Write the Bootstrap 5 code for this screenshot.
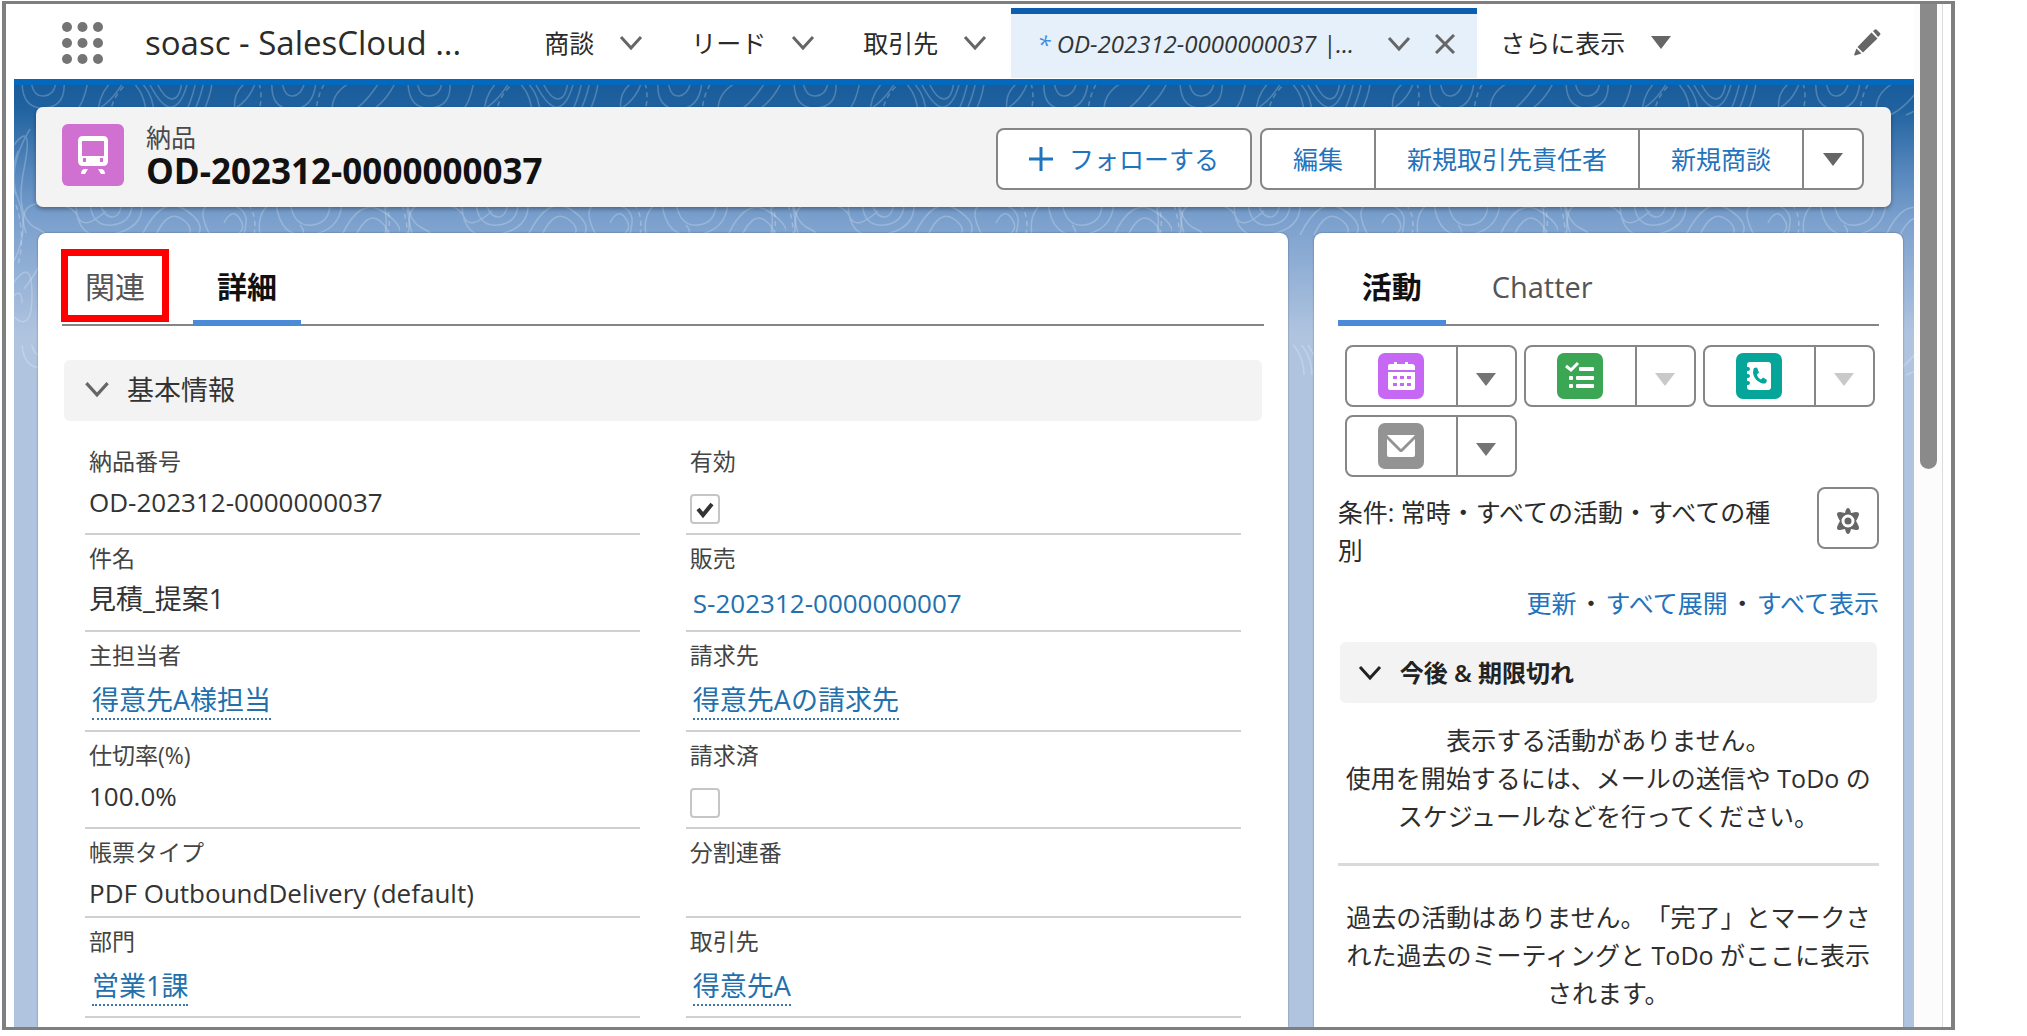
<!DOCTYPE html>
<html lang="ja">
<head>
<meta charset="utf-8">
<meta name="viewport" content="width=device-width, initial-scale=1">
<title>納品 OD-202312-0000000037</title>
<link href="https://cdn.jsdelivr.net/npm/bootstrap@5.3.0/dist/css/bootstrap.min.css" rel="stylesheet">
<style>
  body { font-family: "Open Sans", "Noto Sans CJK JP", sans-serif; font-size: 25px; line-height: 38px; color: #2e2e2e; background: #fff; }
  a { color: #1f74bd; text-decoration: none; }
  button { font-family: inherit; }
  .app-frame { height: 100vh; padding: 1px 72px 6px 2px; }
  .app-window { border: 4px solid #7f7f7f; border-top-width: 3px; border-bottom-width: 3px; padding-left: 8px; }
  .scroll-rail { width: 29px; padding-left: 6px; background: #fcfcfc; border-right: 1px solid #dcdcdc; margin-right: 8px; }
  .scroll-thumb { width: 17px; height: 45.5%; background: #8a8a8a; border-radius: 0 0 9px 9px; }

  .app-nav { height: 81px; border-bottom: 6px solid #0468bd; padding: 2px 33px 0 48px; color: #2b2b2b; }
  .app-name { font-size: 33px; margin-left: 42px; margin-right: 83px; }
  .nav-entry { gap: 25px; margin-right: 48px; }
  .nav-entry:nth-of-type(3) { margin-right: 24px; }
  .nav-entry a, .more-entry { color: #2b2b2b; }
  .icon-btn { border: 0; background: none; padding: 0; line-height: 0; display: inline-flex; }
  .record-tab { margin-top: 2px; margin-bottom: 1px; border-top: 6px solid #0b5fae; background: #e5f0fa; width: 466px; padding: 0 22px 4px 26px; }
  .record-tab a { color: #333; font-size: 24px; font-style: italic; }
  .record-tab .dirty { color: #3b8ede; }
  .more-entry { gap: 26px; margin-left: 23px; font-size: 25px; }

  .stage { background: linear-gradient(#1a5c9b 0, #1f629f 22px, #5586bc 85px, #7ba0cd 135px, #b0c4e0 250px, #b0c4e0 100%); padding: 22px 11px 0 22px; }
  .topo { position: absolute; left: 0; top: 0; width: 100%; height: 300px; }
  .record-head { background: #f3f3f3; border-radius: 7px; height: 100px; margin-right: 12px; padding: 0 27px 0 26px; gap: 22px; box-shadow: 0 2px 4px rgba(0,0,0,.35); }
  .record-kind { font-size: 25px; line-height: 32px; color: #4a4a4a; }
  .record-name { font-size: 35px; line-height: 36px; font-weight: 700; color: #111; margin: 0; }
  .act { background: #fff; border: 2px solid #868686; border-radius: 8px; color: #1f74bd; font-size: 25px; line-height: 38px; height: 62px; padding: 0 31px; }
  .act.arrow { padding: 0 19px; }
  .act svg { vertical-align: middle; }
  .btn-group > .act + .act { margin-left: -2px; border-top-left-radius: 0; border-bottom-left-radius: 0; }
  .btn-group > .act:not(:last-child) { border-top-right-radius: 0; border-bottom-right-radius: 0; }

  .panes { gap: 26px; margin-top: 26px; padding-left: 2px; }
  .pane { background: #fff; border-radius: 8px 8px 0 0; box-shadow: 0 0 2px rgba(0,0,0,.4); padding: 16px 24px 0; min-width: 0; }
  .pane-main { flex: 1 1 0; }
  .pane-side { flex: 0 0 31.6%; }
  .tabs-line { border-bottom: 2px solid #858585; height: 77px; }
  .tabs-line a { font-size: 30px; color: #555; padding: 19px 24px 0; display: block; height: 77px; }
  .tabs-line a.on { color: #111; font-weight: 700; border-bottom: 6px solid #4a8ad8; }
  .tabs-line a.marked { border: 7px solid #f00; height: 73px; padding: 12px 17px 0; margin-right: 24px; margin-left: -1px; }
  .tabs-line a.latin { padding-left: 46px; font-size: 29px; }
  .fold { background: #f3f3f3; border: 0; border-radius: 6px; height: 61px; width: calc(100% - 4px); margin: 0 2px; text-align: left; }
  .fold-main { font-size: 27px; padding: 0 20px 2px; gap: 17px; margin-top: 34px; color: #333; }
  .fold-side { font-size: 24px; font-weight: 600; padding: 0 18px; gap: 18px; margin-top: 20px; color: #222; }

  .fields { display: grid; grid-template-columns: 1fr 1fr; column-gap: 46px; margin: 17px 23px 0; }
  .field { border-bottom: 2px solid #d0d0d0; padding: 8px 4px 0; min-height: 97px; }
  .field.low { min-height: 89px; }
  .field.tall { min-height: 100px; }
  .field-name { font-size: 23px; line-height: 30px; color: #444; display: block; }
  .field-value { font-size: 26px; line-height: 36px; color: #333; margin-top: 8px; }
  .field-value.kanji { font-size: 27px; }
  .field-value.linked { margin-top: 12px; padding-left: 3px; }
  .field-value a { color: #2370ad; }
  .dotted { border-bottom: 2px dotted #3c77a8; display: inline-block; line-height: 36px; }
  .field .form-check-input { width: 30px; height: 30px; margin: 18px 0 0; border: 2px solid #c6c6c6; border-radius: 4px; background-color: #fff; display: block; opacity: 1; box-shadow: none; }
  .field .form-check-input:checked { background-image: url("data:image/svg+xml,%3Csvg xmlns='http://www.w3.org/2000/svg' viewBox='0 0 26 26'%3E%3Cpath d='M6 13l5 6L20 8' fill='none' stroke='%23333' stroke-width='4'/%3E%3C/svg%3E"); }

  .quick { gap: 8px 7px; margin: 19px 0 0 7px; }
  .quick .act { padding: 0; }
  .quick .act:first-child { width: 113px; }
  .quick .act:last-child { width: 61px; }
  .filter-row { margin-top: 10px; }
  .filter-text { color: #2b2b2b; margin-top: 6px; max-width: 450px; }
  .gear { width: 62px; padding: 0; }
  .list-links { gap: 2px; margin-top: 15px; }
  .empty-text { text-align: center; padding: 0 6px; margin: 18px 0 0; text-spacing-trim: space-all; }
  .side-rule { border-top: 3px solid #dadada; opacity: 1; margin: 28px 0 0; }
  .side-rule + .empty-text { margin-top: 32px; }
</style>
<script src="https://cdn.jsdelivr.net/npm/bootstrap@5.3.0/dist/js/bootstrap.bundle.min.js"></script>
</head>
<body class="overflow-hidden">
<svg width="0" height="0" class="position-absolute">
  <symbol id="chev" viewBox="0 0 24 16"><path d="M2 2l10 11L22 2" fill="none" stroke="currentColor" stroke-width="3"/></symbol>
  <symbol id="tri" viewBox="0 0 20 13"><path d="M0 0h20L10 13z" fill="currentColor"/></symbol>
</svg>
<div class="app-frame">
<div class="app-window d-flex h-100 overflow-hidden">
  <div class="d-flex flex-column flex-grow-1 overflow-hidden">
    <nav class="app-nav d-flex align-items-stretch flex-shrink-0">
      <button class="icon-btn align-items-center" aria-label="アプリケーションランチャー">
        <svg width="41" height="42" viewBox="0 0 41 42" fill="#747474"><circle cx="5" cy="5" r="5"/><circle cx="20.500" cy="5" r="5"/><circle cx="36" cy="5" r="5"/><circle cx="5" cy="21" r="5"/><circle cx="20.500" cy="21" r="5"/><circle cx="36" cy="21" r="5"/><circle cx="5" cy="37" r="5"/><circle cx="20.500" cy="37" r="5"/><circle cx="36" cy="37" r="5"/></svg>
      </button>
      <span class="app-name align-self-center text-nowrap">soasc - SalesCloud ...</span>
      <div class="nav-entry d-flex align-items-center text-nowrap"><a href="#">商談</a><button class="icon-btn" aria-label="商談リスト"><svg width="24" height="16" color="#666"><use href="#chev"/></svg></button></div>
      <div class="nav-entry d-flex align-items-center text-nowrap"><a href="#">リード</a><button class="icon-btn" aria-label="リードリスト"><svg width="24" height="16" color="#666"><use href="#chev"/></svg></button></div>
      <div class="nav-entry d-flex align-items-center text-nowrap"><a href="#">取引先</a><button class="icon-btn" aria-label="取引先リスト"><svg width="24" height="16" color="#666"><use href="#chev"/></svg></button></div>
      <div class="record-tab d-flex align-items-center text-nowrap">
        <a href="#" class="me-auto"><span class="dirty">*</span> OD-202312-0000000037 |...</a>
        <button class="icon-btn me-4" aria-label="タブ操作"><svg width="24" height="16" color="#666"><use href="#chev"/></svg></button>
        <button class="icon-btn" aria-label="タブを閉じる"><svg width="20" height="20" viewBox="0 0 20 20" stroke="#666" stroke-width="3"><path d="M1 1l18 18M19 1L1 19"/></svg></button>
      </div>
      <button class="icon-btn more-entry align-items-center text-nowrap">さらに表示 <svg width="20" height="13" color="#666"><use href="#tri"/></svg></button>
      <button class="icon-btn ms-auto align-items-center" aria-label="編集"><svg width="27" height="27" viewBox="0 0 27 27" fill="#666"><path d="M19 2l2-1.500q1-.5 2 .5l3 3q1 1 0 2l-2 2zM17.500 3.500l6 6L9 23.500 3.500 18zM2.500 19.500l5 5L1 26.500q-1 0-.8-1z"/></svg></button>
    </nav>

    <main class="stage position-relative d-flex flex-column flex-grow-1">
      <svg class="topo" aria-hidden="true">
        <defs><pattern id="contour" width="386" height="260" patternUnits="userSpaceOnUse">
          <g fill="none" stroke="#fff" stroke-opacity=".22" stroke-width="1.500">
            <path d="M8-4q0 28 22 27t20-27M17-4q2 16 13 15t12-15M62 26q8-8 12-30M84 30q0-20 14-34M70 30q24-6 40-34"/>
            <path d="M118-4q14 14 14 34M126-4q14 14 14 34M134-4q14 28 24 26t16-26M142-4q8 18 16 18t10-18M182-4q-4 20-12 34M190-4q-4 20-12 34M198-4q0 12-10 34"/>
            <path d="M206 30q28-8 36-34M222 30q-6-22 12-34M258-4q-2 28 20 28t24-28M268-4q2 16 11 15t12-15M318 30q-2-24 22-34M332 30q18-8 34-34M348 30q22-8 34-34"/>
            <path d="M0 60q20-26 10 24t14 60-14 60M4 66q-10 28-2 44M16 44q-24 40-12 70t-4 62M378 50q-24 20-14 48t8 44-10 50"/>
            <path d="M12 148q-10-30 18-30t34 14 28-6M62 118q0 38 34 32t32-32M76 118q2 24 22 22t20-22M86 118q4 14 12 14t10-14M128 150q20-40 42-26t14 26M142 150q12-26 26-16t4 18M196 150q-18-34 10-32t26 20-8 16M210 138q8-16 16-4t-8 18"/>
            <path d="M246 150q-4-24 14-34M262 118q4 36 34 32t32-32M276 118q4 24 22 22t18-22M328 150q18-38 40-24t18 26M342 150q12-24 24-14t4 16"/>
            <path d="M-2 200q20-30 20 10t-20 20M-2 212q10-10 10 6M250 240q-8-40 20-64t16-36M258 248q0-40 24-64M266 252q0-40 24-50"/>
          </g>
          <g fill="none" stroke="#fff" stroke-opacity=".25" stroke-width="1.500" stroke-dasharray="5 4"><path d="M96 30q2-20 20-34M244 30q6-20 0-34M302 30q0-18 10-34M240 150q4-24-10-34M374 150q4-20-4-34M2 120q10 30 2 60"/></g>
        </pattern></defs>
        <rect width="100%" height="300" fill="url(#contour)"/>
      </svg>
      <header class="record-head position-relative d-flex align-items-center flex-shrink-0">
        <svg width="62" height="62" viewBox="0 0 62 62" class="flex-shrink-0 mb-1"><rect width="62" height="62" rx="6" fill="#d070d0"/><path fill="#fff" fill-rule="evenodd" d="M21 12h20q5 0 5 5v20q0 5-5 5H21q-5 0-5-5V17q0-5 5-5zM20 17v15h22V17zM21 34v4h3v-4zM38 34v4h3v-4zM22 45h4l-3 5h-4q0-4 3-5zM36 45h4q3 1 3 5h-4z"/></svg>
        <div class="text-nowrap mb-1">
          <div class="record-kind">納品</div>
          <h1 class="record-name">OD-202312-0000000037</h1>
        </div>
        <div class="d-flex ms-auto mt-1 gap-2 text-nowrap">
          <button class="act d-flex align-items-center gap-3"><svg width="24" height="24" viewBox="0 0 24 24" stroke="#1f74bd" stroke-width="3"><path d="M12 0v24M0 12h24"/></svg>フォローする</button>
          <div class="btn-group">
            <button class="act">編集</button><button class="act">新規取引先責任者</button><button class="act">新規商談</button><button class="act arrow d-flex align-items-center" aria-label="その他の操作"><svg width="20" height="13" color="#666"><use href="#tri"/></svg></button>
          </div>
        </div>
      </header>

      <div class="panes position-relative d-flex flex-grow-1">
        <section class="pane pane-main">
          <div class="tabs-line d-flex"><a href="#" class="marked">関連</a><a href="#" class="on">詳細</a></div>
          <button class="fold fold-main d-flex align-items-center"><svg width="26" height="17" color="#666"><use href="#chev"/></svg>基本情報</button>
          <div class="fields">
            <div class="field"><span class="field-name">納品番号</span><div class="field-value">OD-202312-0000000037</div></div>
            <div class="field"><label class="field-name" for="valid">有効</label><input class="form-check-input" type="checkbox" id="valid" checked></div>
            <div class="field"><span class="field-name">件名</span><div class="field-value kanji">見積_提案1</div></div>
            <div class="field"><span class="field-name">販売</span><div class="field-value linked"><a href="#">S-202312-0000000007</a></div></div>
            <div class="field tall"><span class="field-name">主担当者</span><div class="field-value kanji linked"><a href="#" class="dotted">得意先A様担当</a></div></div>
            <div class="field tall"><span class="field-name">請求先</span><div class="field-value kanji linked"><a href="#" class="dotted">得意先Aの請求先</a></div></div>
            <div class="field"><span class="field-name">仕切率(%)</span><div class="field-value">100.0%</div></div>
            <div class="field"><label class="field-name" for="billed">請求済</label><input class="form-check-input" type="checkbox" id="billed"></div>
            <div class="field low"><span class="field-name">帳票タイプ</span><div class="field-value">PDF OutboundDelivery (default)</div></div>
            <div class="field low"><span class="field-name">分割連番</span></div>
            <div class="field tall"><span class="field-name">部門</span><div class="field-value kanji linked"><a href="#" class="dotted">営業1課</a></div></div>
            <div class="field tall"><span class="field-name">取引先</span><div class="field-value kanji linked"><a href="#" class="dotted">得意先A</a></div></div>
          </div>
        </section>

        <aside class="pane pane-side">
          <div class="tabs-line d-flex"><a href="#" class="on">活動</a><a href="#" class="latin">Chatter</a></div>
          <div class="quick d-flex flex-wrap">
            <div class="btn-group">
              <button class="act" aria-label="新規行動"><svg width="46" height="46" viewBox="0 0 46 46"><rect width="46" height="46" rx="7" fill="#c768f4"/><path fill="#fff" fill-rule="evenodd" d="M12 11h4V9h3v2h8V9h3v2h4q2 0 3 2v4H10v-4q0-2 2-2zM10 19h27v16q0 2-2 2H12q-2 0-2-2zM15 23v3h4v-3zM22 23v3h4v-3zM29 23v3h4v-3zM15 30v3h4v-3zM22 30v3h4v-3zM29 30v3h4v-3z"/></svg></button><button class="act" aria-label="行動メニュー"><svg width="20" height="13" color="#747474"><use href="#tri"/></svg></button>
            </div>
            <div class="btn-group">
              <button class="act" aria-label="新規ToDo"><svg width="46" height="46" viewBox="0 0 46 46"><rect width="46" height="46" rx="7" fill="#3ba755"/><g fill="#fff"><rect x="22" y="14" width="15" height="4" rx="1"/><rect x="19" y="23" width="18" height="4" rx="1"/><rect x="19" y="31" width="18" height="4" rx="1"/><rect x="12" y="23" width="4" height="4" rx="1"/><rect x="12" y="31" width="4" height="4" rx="1"/></g><path d="M9 13l5 4 7-7" fill="none" stroke="#fff" stroke-width="3"/></svg></button><button class="act" disabled aria-label="ToDoメニュー"><svg width="20" height="13" color="#c9c9c9"><use href="#tri"/></svg></button>
            </div>
            <div class="btn-group">
              <button class="act" aria-label="活動の記録"><svg width="46" height="46" viewBox="0 0 46 46"><rect width="46" height="46" rx="7" fill="#06a59a"/><path fill="#fff" d="M14 9h18q3 0 3 3v22q0 3-3 3H14q-3 0-3-3v-2h1q2 0 2-2t-2-2h-1v-3h1q2 0 2-2t-2-2h-1v-3h1q2 0 2-2t-2-2h-1v-2q0-3 3-3z"/><path fill="#06a59a" d="M18 15l3-.5 2 5-2 2q1 4 4 5l2-2 4 2.500-1 3q-2 1-5 0-7-3-8-10 0-3 1-5z"/></svg></button><button class="act" disabled aria-label="記録メニュー"><svg width="20" height="13" color="#c9c9c9"><use href="#tri"/></svg></button>
            </div>
            <div class="btn-group">
              <button class="act" aria-label="メール"><svg width="46" height="46" viewBox="0 0 46 46"><rect width="46" height="46" rx="7" fill="#939393"/><path fill="#fff" d="M9 12h28L23 26zM9 16l12.500 12.500q1.500 1 3 0L37 16v16q0 2-2 2H11q-2 0-2-2z"/></svg></button><button class="act" aria-label="メールメニュー"><svg width="20" height="13" color="#747474"><use href="#tri"/></svg></button>
            </div>
          </div>
          <div class="filter-row d-flex justify-content-between">
            <div class="filter-text">条件: 常時・すべての活動・すべての種別</div>
            <button class="act gear flex-shrink-0" aria-label="活動設定"><svg width="24" height="26" viewBox="0 0 24 26"><path d="M12 0q2 0 3 5l5-1q3 0 3 2t-3 7q3 5 3 7t-3 2l-5-1q-1 5-3 5t-3-5l-5 1q-3 0-3-2t3-7Q1 8 1 6t3-2l5 1q1-5 3-5z" fill="#666"/><circle cx="12" cy="13" r="5" fill="#666" stroke="#fff" stroke-width="3"/></svg></button>
          </div>
          <div class="list-links d-flex justify-content-end text-nowrap"><a href="#">更新</a><span>・</span><a href="#">すべて展開</a><span>・</span><a href="#">すべて表示</a></div>
          <button class="fold fold-side d-flex align-items-center"><svg width="24" height="16" color="#222"><use href="#chev"/></svg>今後 &amp; 期限切れ</button>
          <p class="empty-text">表示する活動がありません。<br>使用を開始するには、メールの送信や ToDo のスケジュールなどを行ってください。</p>
          <hr class="side-rule">
          <p class="empty-text">過去の活動はありません。「完了」とマークされた過去のミーティングと ToDo がここに表示されます。</p>
        </aside>
      </div>
    </main>
  </div>
  <div class="scroll-rail flex-shrink-0"><div class="scroll-thumb"></div></div>
</div>
</div>
</body>
</html>
